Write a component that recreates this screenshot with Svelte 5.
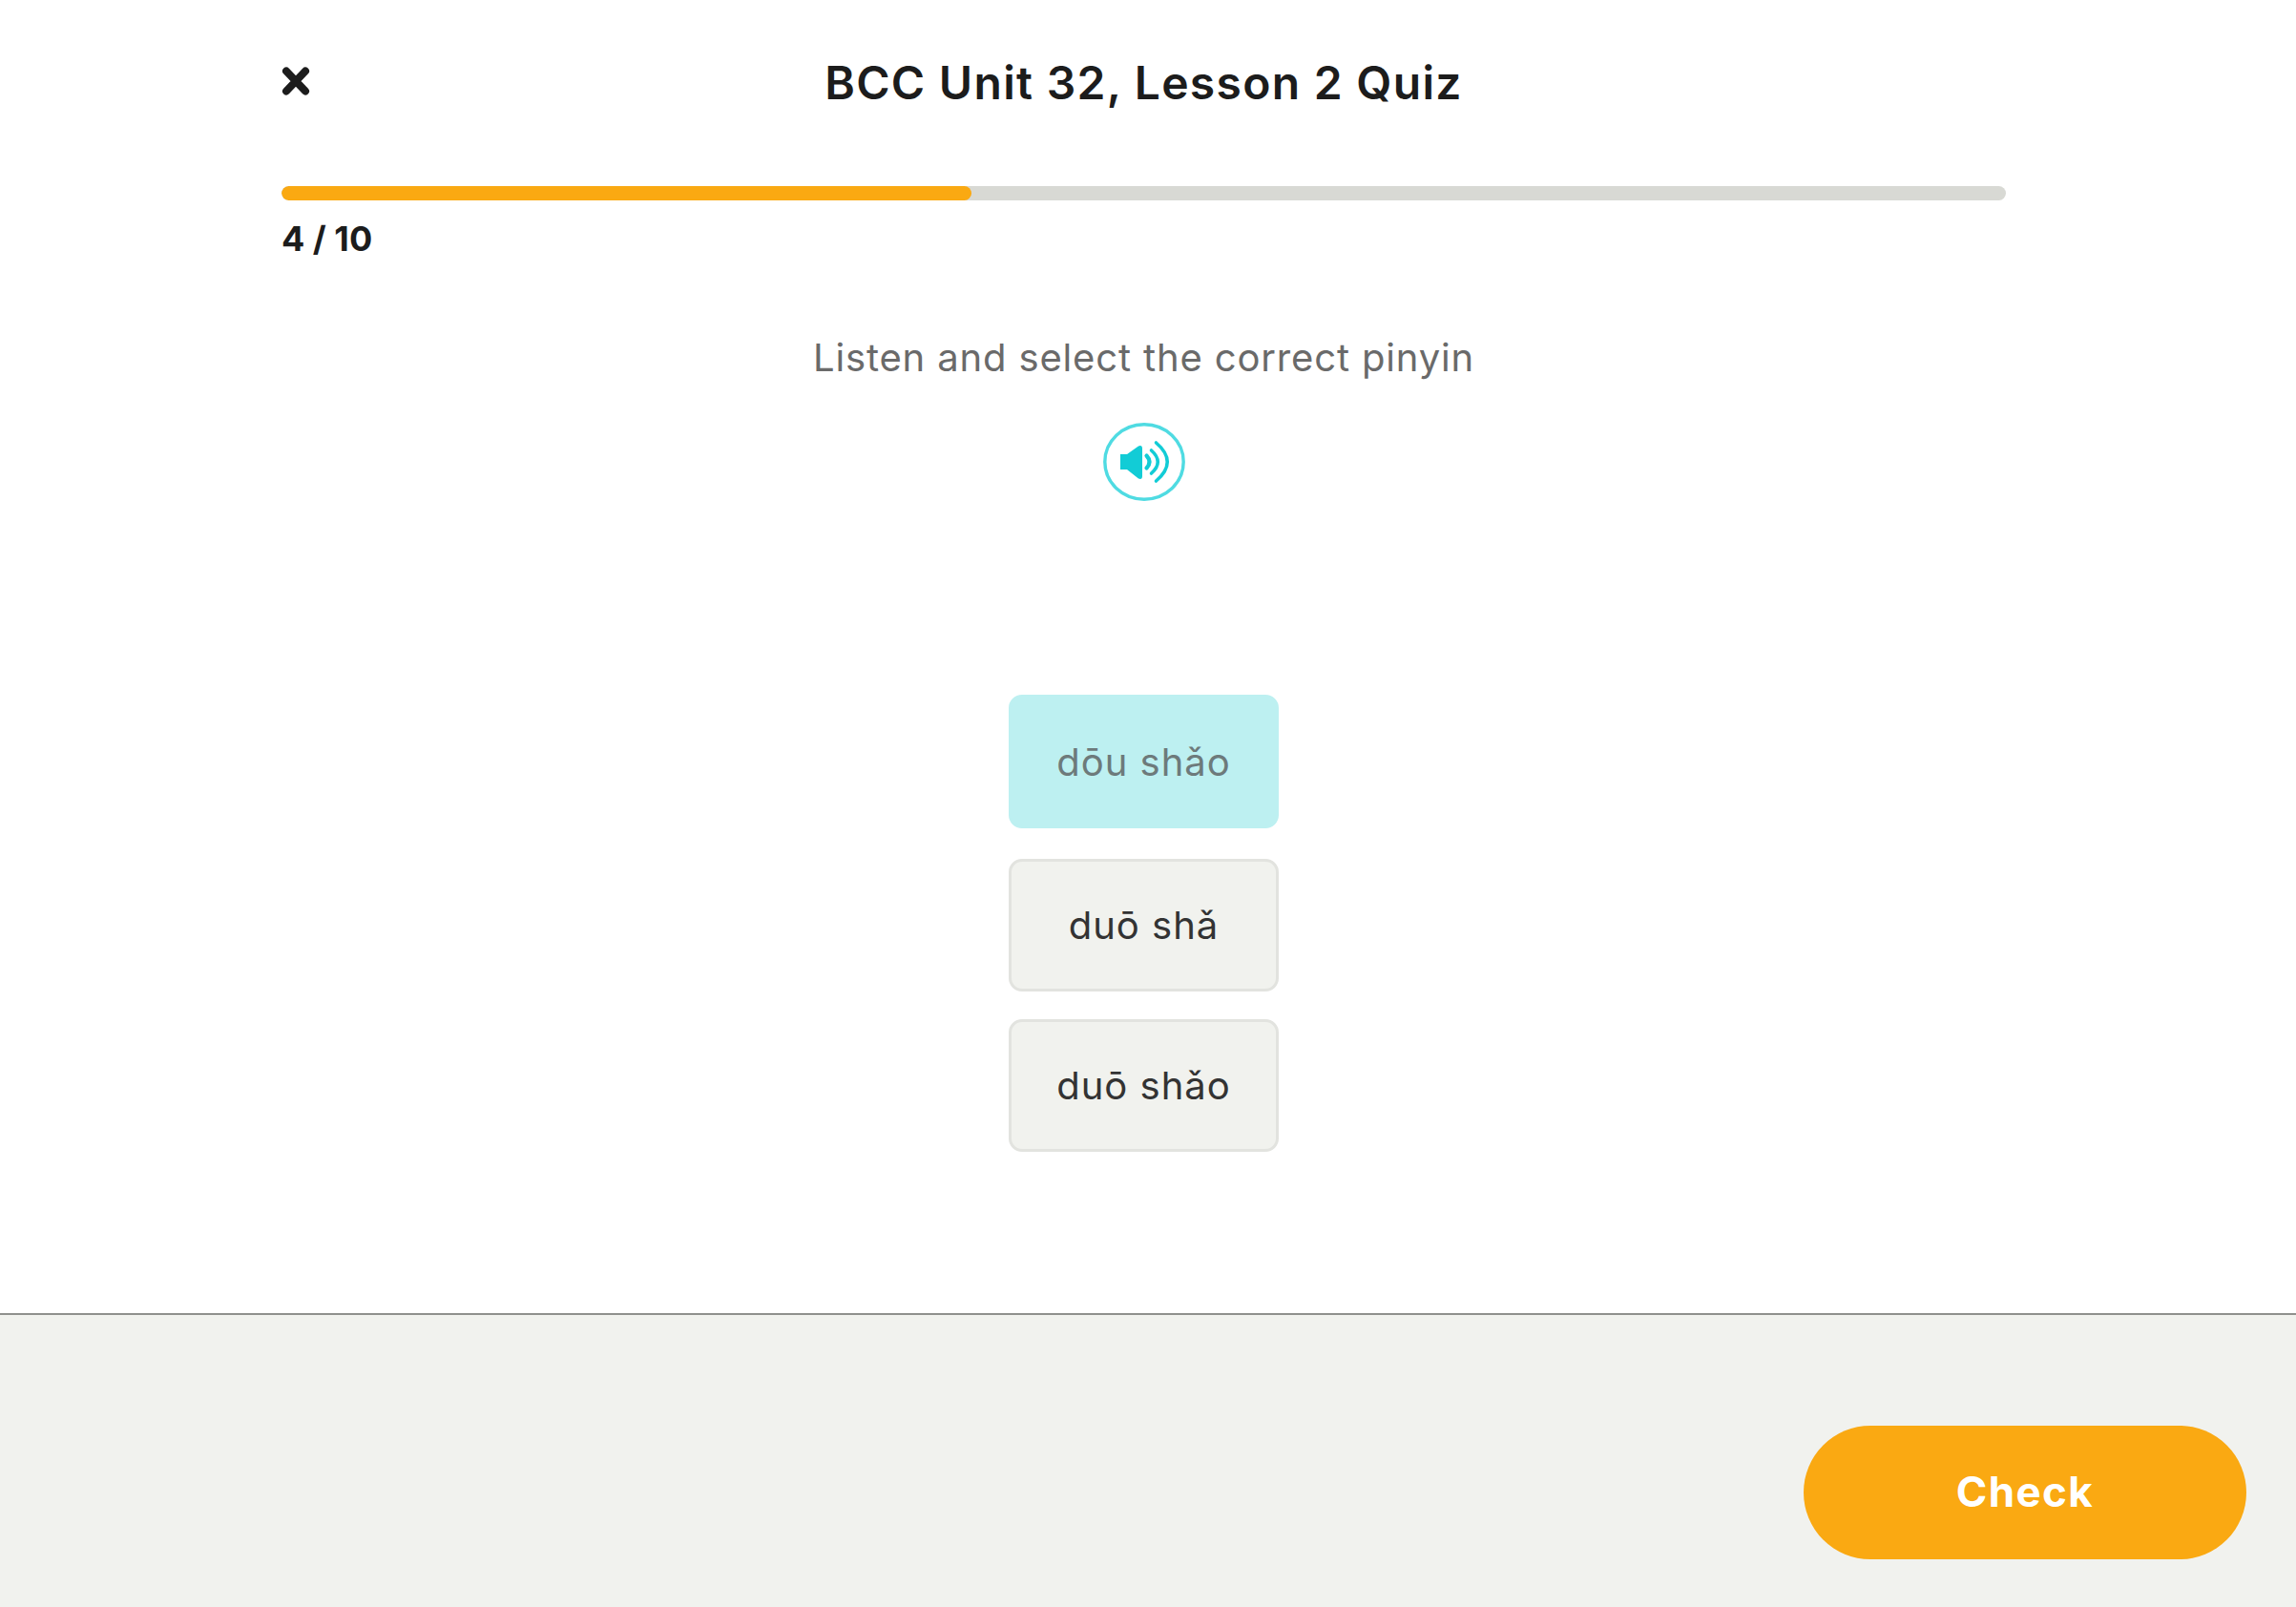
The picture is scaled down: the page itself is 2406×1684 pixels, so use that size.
<script>
  const options = [
    { label: 'dōu shǎo', selected: true },
    { label: 'duō shǎ', selected: false },
    { label: 'duō shǎo', selected: false }
  ];
</script>

<div class="page">
  <main class="quiz">
    <header class="top">
      <button class="close" aria-label="Close">
        <svg viewBox="0 0 30 32" width="30" height="32">
          <path d="M5 5.5 L25 26.5 M25 5.5 L5 26.5" stroke="#1c1c1c" stroke-width="8" stroke-linecap="round" fill="none" />
        </svg>
      </button>
      <h1>BCC Unit 32, Lesson 2 Quiz</h1>
    </header>

    <div class="track"><div class="fill" style="width: 40%"></div></div>
    <div class="count">4 / 10</div>

    <p class="prompt">Listen and select the correct pinyin</p>

    <button class="audio" aria-label="Play audio">
      <svg viewBox="0 0 86 82" width="86" height="82">
        <ellipse cx="43" cy="41" rx="41.2" ry="39.2" fill="none" stroke="#4fdbe2" stroke-width="3.4" />
        <path d="M18 33 H25 L37 24.5 Q41 23 41 27 V56 Q41 60 37 58.5 L25 49 H18 Z" fill="#12ccd6" />
        <g fill="none" stroke="#12ccd6" stroke-linecap="round">
          <path d="M45.5 34.5 Q51.5 41 45.5 47.5" stroke-width="4.2" />
          <path d="M50.5 29 Q64 41 50.5 53" stroke-width="3.6" />
          <path d="M55.5 21 Q79 41 55.5 61" stroke-width="3.6" />
        </g>
      </svg>
    </button>

    <div class="options">
      {#each options as option}
        <button class="option" class:selected={option.selected}>{option.label}</button>
      {/each}
    </div>
  </main>

  <footer class="bottom">
    <button class="check">Check</button>
  </footer>
</div>

<style>
  :global(body) {
    margin: 0;
    background: #ffffff;
  }
  .page {
    width: 2406px;
    height: 1684px;
    display: flex;
    flex-direction: column;
    font-family: "Inter", sans-serif;
    color: #1c1c1c;
  }
  button {
    font-family: inherit;
    cursor: pointer;
  }
  .quiz {
    box-sizing: border-box;
    height: 1376px;
    width: 1807px;
    margin-left: 295px;
    display: flex;
    flex-direction: column;
    align-items: center;
  }
  .top {
    position: relative;
    width: 100%;
    height: 195px;
    display: flex;
    justify-content: center;
    padding-top: 56px;
    box-sizing: border-box;
  }
  .close {
    position: absolute;
    left: 0;
    top: 69px;
    width: 30px;
    height: 32px;
    padding: 0;
    border: 0;
    background: none;
    display: flex;
  }
  h1 {
    margin: 0;
    font-size: 48px;
    line-height: 62px;
    font-weight: 600;
    letter-spacing: 1.3px;
    color: #1c1c1c;
  }
  .track {
    width: 100%;
    height: 15px;
    border-radius: 8px;
    background: #d8d9d4;
    overflow: hidden;
    flex: none;
  }
  .fill {
    height: 100%;
    background: #faa912;
    border-radius: 8px;
  }
  .count {
    align-self: flex-start;
    margin-top: 17px;
    font-size: 36px;
    line-height: 46px;
    font-weight: 700;
  }
  .prompt {
    margin: 77px 0 0;
    font-size: 40px;
    line-height: 50px;
    font-weight: 400;
    letter-spacing: 0.85px;
    color: #6a6a6a;
  }
  .audio {
    margin-top: 43px;
    width: 86px;
    height: 82px;
    padding: 0;
    border: 0;
    background: none;
    display: flex;
  }
  .options {
    margin-top: 203px;
    width: 283px;
    display: flex;
    flex-direction: column;
    gap: 29px;
  }
  .option {
    box-sizing: border-box;
    height: 139px;
    border: 3px solid #e2e3df;
    border-radius: 14px;
    background: #f1f2ee;
    font-size: 40px;
    letter-spacing: 1px;
    color: #333333;
    padding: 0;
  }
  .option.selected {
    height: 140px;
    margin-bottom: 3px;
    border-color: #bdf0f1;
    background: #bdf0f1;
    color: #6d7a7b;
  }
  .bottom {
    box-sizing: border-box;
    flex: 1;
    border-top: 2px solid #8f908d;
    background: #f1f2ee;
    display: flex;
    justify-content: flex-end;
    align-items: flex-start;
    padding: 116px 52px 0 0;
  }
  .check {
    width: 464px;
    height: 140px;
    border: 0;
    border-radius: 70px;
    background: #faa912;
    color: #ffffff;
    font-size: 44px;
    font-weight: 700;
    letter-spacing: 1.4px;
    padding: 0 0 3px;
  }
</style>
